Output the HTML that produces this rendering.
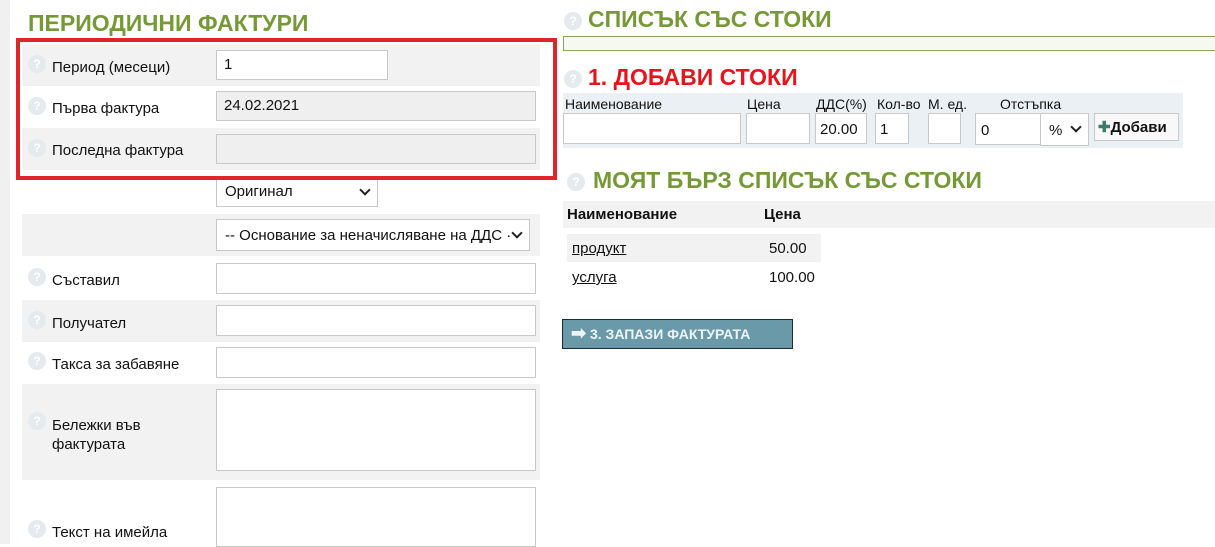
<!DOCTYPE html><html><head><meta charset="utf-8"><style>
*{box-sizing:border-box;margin:0;padding:0}
body{width:1215px;height:544px;overflow:hidden;background:#fff;font-family:"Liberation Sans",sans-serif;font-size:14px;color:#111;position:relative}
.a{position:absolute}
.row{position:absolute;left:22px;width:518px}
.g{background:#f2f2f2}
.lbl{position:absolute;left:30px;font-size:15px}
.q{position:absolute;width:18px;height:18px;border-radius:50%;background:#e4eaee;color:#fff;font-size:12px;text-align:center;line-height:18px;font-weight:bold}
.in{position:absolute;background:#fff;border:1px solid #c8c8c8;font-size:15px;padding:5px 7px}
.ro{background:#efefef}
h1{position:absolute;font-size:23px;font-weight:bold;color:#759a35;white-space:nowrap}
.sel:after{content:"";position:absolute;right:8px;top:9px;width:6px;height:6px;border-right:2px solid #222;border-bottom:2px solid #222;transform:rotate(45deg)}
.sl{position:absolute;font-size:14px}
</style></head><body>
<div class="a" style="left:0;top:0;width:10px;height:544px;background:#f0f0f0"></div>
<h1 style="left:28px;top:10px">ПЕРИОДИЧНИ ФАКТУРИ</h1>

<div class="row g" style="top:44px;height:42px"></div>
<div class="row" style="top:128px;height:42px;background:#f2f2f2"></div>
<div class="row g" style="top:214px;height:42px"></div>
<div class="row g" style="top:300px;height:42px"></div>
<div class="row g" style="top:384px;height:96px"></div>

<div class="q" style="left:28px;top:55px">?</div><div class="lbl" style="left:52px;top:59px">Период (месеци)</div>
<div class="q" style="left:28px;top:97px">?</div><div class="lbl" style="left:52px;top:100px">Първа фактура</div>
<div class="q" style="left:28px;top:139px">?</div><div class="lbl" style="left:52px;top:142px">Последна фактура</div>
<div class="q" style="left:28px;top:268px">?</div><div class="lbl" style="left:52px;top:272px">Съставил</div>
<div class="q" style="left:28px;top:311px">?</div><div class="lbl" style="left:52px;top:315px">Получател</div>
<div class="q" style="left:28px;top:352px">?</div><div class="lbl" style="left:52px;top:356px">Такса за забавяне</div>
<div class="q" style="left:28px;top:412px">?</div><div class="lbl" style="left:52px;top:416px;line-height:19px">Бележки във<br>фактурата</div>
<div class="q" style="left:28px;top:520px">?</div><div class="lbl" style="left:52px;top:524px">Текст на имейла</div>

<div class="in" style="left:216px;top:50px;width:172px;height:30px">1</div>
<div class="in ro" style="left:216px;top:91px;width:320px;height:30px">24.02.2021</div>
<div class="in ro" style="left:216px;top:134px;width:320px;height:30px"></div>
<div class="in sel" style="left:216px;top:176px;width:162px;height:31px;padding:6px 8px">Оригинал</div>
<div class="in sel" style="left:216px;top:219px;width:314px;height:32px;padding:7px 8px;white-space:nowrap;overflow:hidden">-- Основание за неначисляване на ДДС ·</div>
<div class="in" style="left:216px;top:263px;width:320px;height:31px"></div>
<div class="in" style="left:216px;top:305px;width:320px;height:31px"></div>
<div class="in" style="left:216px;top:347px;width:320px;height:31px"></div>
<div class="in" style="left:216px;top:389px;width:320px;height:82px"></div>
<div class="in" style="left:216px;top:487px;width:320px;height:60px"></div>

<div class="a" style="left:16px;top:38px;width:541px;height:142px;border:4px solid #e3232c"></div>

<div class="q" style="left:564px;top:12px">?</div>
<h1 style="left:588px;top:6px">СПИСЪК СЪС СТОКИ</h1>
<div class="a" style="left:563px;top:36px;width:660px;height:15px;border:1px solid #8aa35a;background:#f6f9ef"></div>
<div class="q" style="left:564px;top:70px">?</div>
<h1 style="left:588px;top:64px;color:#e8141c">1. ДОБАВИ СТОКИ</h1>
<div class="a" style="left:563px;top:93px;width:620px;height:55px;background:#eaf0f3"></div>
<div class="sl" style="left:565px;top:96px">Наименование</div>
<div class="sl" style="left:747px;top:96px">Цена</div>
<div class="sl" style="left:816px;top:96px">ДДС(%)</div>
<div class="sl" style="left:877px;top:96px">Кол-во</div>
<div class="sl" style="left:928px;top:96px">М. ед.</div>
<div class="sl" style="left:1000px;top:96px">Отстъпка</div>
<div class="in" style="left:563px;top:113px;width:178px;height:31px"></div>
<div class="in" style="left:746px;top:113px;width:64px;height:31px"></div>
<div class="in" style="left:815px;top:113px;width:52px;height:31px;padding:7px 4px">20.00</div>
<div class="in" style="left:875px;top:113px;width:34px;height:31px;padding:7px 4px">1</div>
<div class="in" style="left:928px;top:113px;width:33px;height:31px"></div>
<div class="in" style="left:975px;top:113px;width:66px;height:32px;padding:8px 5px">0</div>
<div class="in sel" style="left:1040px;top:113px;width:49px;height:33px;padding:8px 8px">%</div>
<div class="in" style="left:1094px;top:113px;width:85px;height:28px;padding:4px 3px;font-weight:bold;background:#f8f8f8"><span style="color:#3d7a6e">✚</span>Добави</div>

<div class="q" style="left:567px;top:173px">?</div>
<h1 style="left:593px;top:167px">МОЯТ БЪРЗ СПИСЪК СЪС СТОКИ</h1>
<div class="a" style="left:563px;top:201px;width:652px;height:27px;background:#f2f2f2"></div>
<div class="a" style="left:567px;top:206px;font-weight:bold;font-size:15px">Наименование</div>
<div class="a" style="left:764px;top:206px;font-weight:bold;font-size:15px">Цена</div>
<div class="a" style="left:567px;top:234px;width:254px;height:28px;background:#f2f2f2"></div>
<div class="a" style="left:572px;top:240px;text-decoration:underline;font-size:15px">продукт</div>
<div class="a" style="left:769px;top:240px;font-size:15px">50.00</div>
<div class="a" style="left:572px;top:269px;text-decoration:underline;font-size:15px">услуга</div>
<div class="a" style="left:769px;top:269px;font-size:15px">100.00</div>

<div class="a" style="left:562px;top:319px;width:231px;height:30px;background:#6a9aa9;border:1px solid #1b2b30;color:#eef4f6;font-weight:bold;font-size:14px;padding:5px 8px;white-space:nowrap"><span style="font-size:18px;line-height:16px">➡</span> 3. ЗАПАЗИ ФАКТУРАТА</div>
</body></html>
